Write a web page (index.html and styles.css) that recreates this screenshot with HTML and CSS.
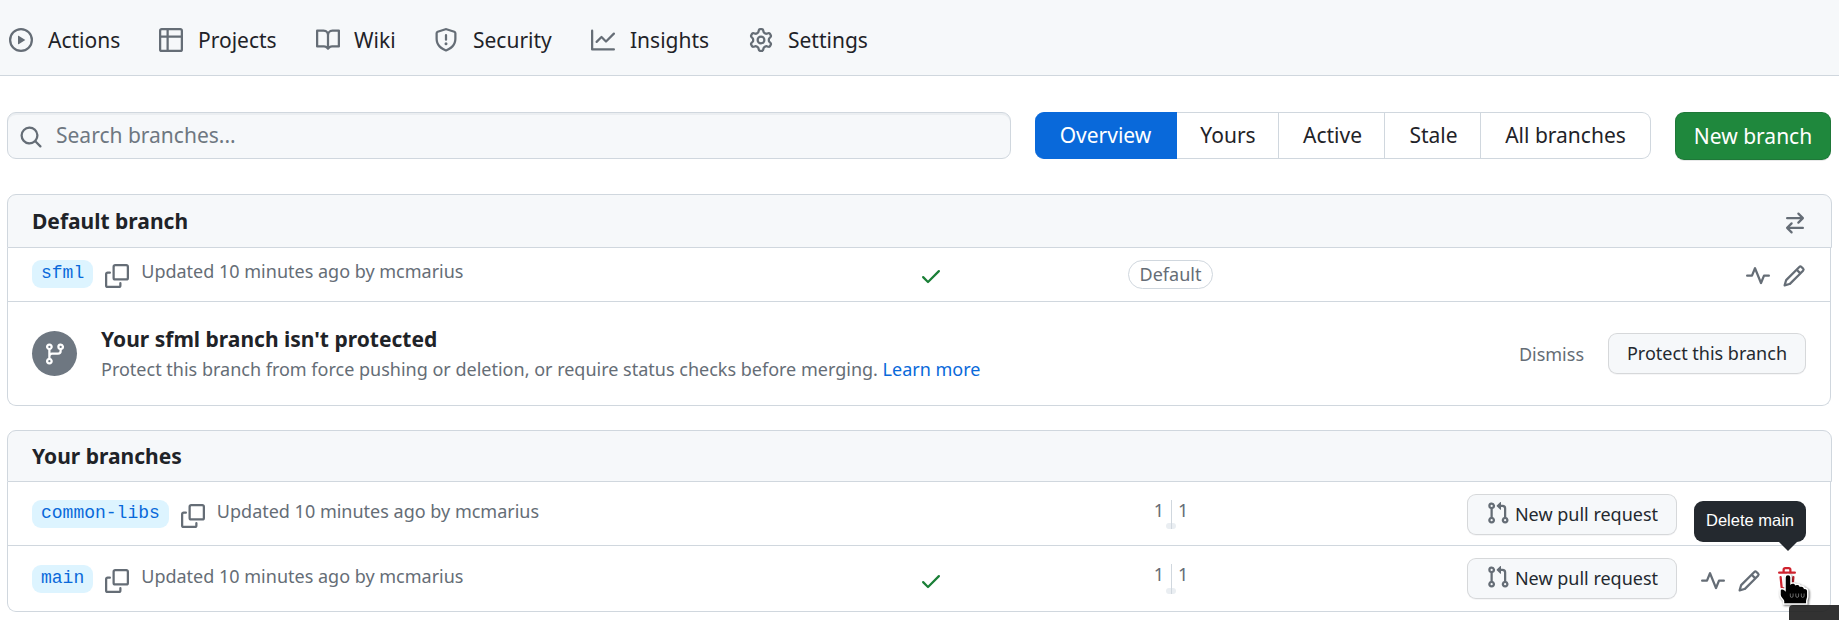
FILE: index.html
```html
<!DOCTYPE html>
<html lang="en">
<head>
<meta charset="utf-8">
<title>Branches</title>
<link rel="stylesheet" href="styles.css">
</head>
<body>
<svg class="sprite" aria-hidden="true">
  <symbol id="play" viewBox="0 0 16 16"><path d="M8 0a8 8 0 1 1 0 16A8 8 0 0 1 8 0ZM1.5 8a6.5 6.5 0 1 0 13 0 6.5 6.5 0 0 0-13 0Zm4.879-2.773 4.264 2.559a.25.25 0 0 1 0 .428l-4.264 2.559A.25.25 0 0 1 6 10.559V5.442a.25.25 0 0 1 .379-.215Z"/></symbol>
  <symbol id="table" viewBox="0 0 16 16"><path d="M0 1.75C0 .784.784 0 1.75 0h12.5C15.216 0 16 .784 16 1.75v12.5A1.75 1.75 0 0 1 14.25 16H1.75A1.75 1.75 0 0 1 0 14.25ZM6.5 6.5v8h7.75a.25.25 0 0 0 .25-.25V6.5Zm8-1.5V1.75a.25.25 0 0 0-.25-.25H6.5V5Zm-13 1.5v7.75c0 .138.112.25.25.25H5v-8ZM5 5V1.5H1.75a.25.25 0 0 0-.25.25V5Z"/></symbol>
  <symbol id="book" viewBox="0 0 16 16"><path d="M0 1.75A.75.75 0 0 1 .75 1h4.253c1.227 0 2.317.59 3 1.501A3.743 3.743 0 0 1 11.006 1h4.245a.75.75 0 0 1 .75.75v10.5a.75.75 0 0 1-.75.75h-4.507a2.25 2.25 0 0 0-1.591.659l-.622.621a.75.75 0 0 1-1.06 0l-.622-.621A2.25 2.25 0 0 0 5.258 13H.75a.75.75 0 0 1-.75-.75Zm7.251 10.324.004-5.073-.002-2.253A2.25 2.25 0 0 0 5.003 2.5H1.5v9h3.757a3.75 3.75 0 0 1 1.994.574ZM8.755 4.75l-.004 7.322a3.752 3.752 0 0 1 1.992-.572H14.5v-9h-3.495a2.25 2.25 0 0 0-2.25 2.25Z"/></symbol>
  <symbol id="shield" viewBox="0 0 16 16"><path d="M7.467.133a1.748 1.748 0 0 1 1.066 0l5.25 1.68A1.75 1.75 0 0 1 15 3.48V7c0 1.566-.32 3.182-1.303 4.682-.983 1.498-2.585 2.813-5.032 3.855a1.697 1.697 0 0 1-1.33 0c-2.447-1.042-4.049-2.357-5.032-3.855C1.32 10.182 1 8.566 1 7V3.48a1.75 1.75 0 0 1 1.217-1.667Zm.61 1.429a.25.25 0 0 0-.153 0l-5.25 1.68a.25.25 0 0 0-.174.238V7c0 1.358.275 2.666 1.057 3.86.784 1.194 2.121 2.34 4.366 3.297a.196.196 0 0 0 .154 0c2.245-.956 3.582-2.104 4.366-3.298C13.225 9.666 13.5 8.36 13.5 7V3.48a.251.251 0 0 0-.174-.237l-5.25-1.68ZM8.75 4.75v3a.75.75 0 0 1-1.5 0v-3a.75.75 0 0 1 1.5 0ZM9 10.5a1 1 0 1 1-2 0 1 1 0 0 1 2 0Z"/></symbol>
  <symbol id="graph" viewBox="0 0 16 16"><path d="M1.5 1.75V13.5h13.75a.75.75 0 0 1 0 1.5H.75a.75.75 0 0 1-.75-.75V1.75a.75.75 0 0 1 1.5 0Zm14.28 2.53-5.25 5.25a.75.75 0 0 1-1.06 0L7 7.06 4.28 9.78a.751.751 0 0 1-1.042-.018.751.751 0 0 1-.018-1.042l3.25-3.25a.75.75 0 0 1 1.06 0L10 7.94l4.72-4.72a.751.751 0 0 1 1.042.018.751.751 0 0 1 .018 1.042Z"/></symbol>
  <symbol id="gear" viewBox="0 0 16 16"><path d="M8 0a8.2 8.2 0 0 1 .701.031C9.444.095 9.99.645 10.16 1.29l.288 1.107c.018.066.079.158.212.224.231.114.454.243.668.386.123.082.233.09.299.071l1.103-.303c.644-.176 1.392.021 1.82.63.27.385.506.792.704 1.218.315.675.111 1.422-.364 1.891l-.814.806c-.049.048-.098.147-.088.294.016.257.016.515 0 .772-.01.147.038.246.088.294l.814.806c.475.469.679 1.216.364 1.891a7.977 7.977 0 0 1-.704 1.217c-.428.61-1.176.807-1.82.63l-1.102-.302c-.067-.019-.177-.011-.3.071a5.909 5.909 0 0 1-.668.386c-.133.066-.194.158-.211.224l-.29 1.106c-.168.646-.715 1.196-1.458 1.26a8.006 8.006 0 0 1-1.402 0c-.743-.064-1.289-.614-1.458-1.26l-.289-1.106c-.018-.066-.079-.158-.212-.224a5.738 5.738 0 0 1-.668-.386c-.123-.082-.233-.09-.299-.071l-1.103.303c-.644.176-1.392-.021-1.82-.63a8.12 8.12 0 0 1-.704-1.218c-.315-.675-.111-1.422.363-1.891l.815-.806c.05-.048.098-.147.088-.294a6.214 6.214 0 0 1 0-.772c.01-.147-.038-.246-.088-.294l-.815-.806C.635 6.045.431 5.298.746 4.623a7.92 7.92 0 0 1 .704-1.217c.428-.61 1.176-.807 1.82-.63l1.102.302c.067.019.177.011.3-.071.214-.143.437-.272.668-.386.133-.066.194-.158.211-.224l.29-1.106C6.009.645 6.556.095 7.299.03 7.53.01 7.764 0 8 0Zm-.571 1.525c-.036.003-.108.036-.137.146l-.289 1.105c-.147.561-.549.967-.998 1.189-.173.086-.34.183-.5.29-.417.278-.97.423-1.529.27l-1.103-.303c-.109-.03-.175.016-.195.045-.22.312-.412.644-.573.99-.014.031-.021.11.059.19l.815.806c.411.406.562.957.53 1.456a4.709 4.709 0 0 0 0 .582c.032.499-.119 1.05-.53 1.456l-.815.806c-.081.08-.073.159-.059.19.162.346.353.677.573.989.02.03.085.076.195.046l1.102-.303c.56-.153 1.113-.008 1.53.27.161.107.328.204.501.29.447.222.85.629.997 1.189l.289 1.105c.029.109.101.143.137.146a6.6 6.6 0 0 0 1.142 0c.036-.003.108-.036.137-.146l.289-1.105c.147-.561.549-.967.998-1.189.173-.086.34-.183.5-.29.417-.278.97-.423 1.529-.27l1.103.303c.109.029.175-.016.195-.045.22-.313.411-.644.573-.99.014-.031.021-.11-.059-.19l-.815-.806c-.411-.406-.562-.957-.53-1.456a4.709 4.709 0 0 0 0-.582c-.032-.499.119-1.05.53-1.456l.815-.806c.081-.08.073-.159.059-.19a6.464 6.464 0 0 0-.573-.989c-.02-.03-.085-.076-.195-.046l-1.102.303c-.56.153-1.113.008-1.53-.27a4.44 4.44 0 0 0-.501-.29c-.447-.222-.85-.629-.997-1.189l-.289-1.105c-.029-.11-.101-.143-.137-.146a6.6 6.6 0 0 0-1.142 0ZM11 8a3 3 0 1 1-6 0 3 3 0 0 1 6 0ZM9.5 8a1.5 1.5 0 1 0-3.001.001A1.5 1.5 0 0 0 9.5 8Z"/></symbol>
  <symbol id="search" viewBox="0 0 16 16"><path d="M10.68 11.74a6 6 0 0 1-7.922-8.982 6 6 0 0 1 8.982 7.922l3.04 3.04a.749.749 0 0 1-.326 1.275.749.749 0 0 1-.734-.215ZM11.5 7a4.499 4.499 0 1 0-8.997 0A4.499 4.499 0 0 0 11.5 7Z"/></symbol>
  <symbol id="switch" viewBox="0 0 16 16"><path d="M5.22 14.78a.75.75 0 0 0 1.06-1.06L4.56 12h8.69a.75.75 0 0 0 0-1.5H4.56l1.72-1.72a.75.75 0 0 0-1.06-1.06l-3 3a.75.75 0 0 0 0 1.06l3 3Zm5.56-6.5a.75.75 0 1 1-1.06-1.06l1.72-1.72H2.75a.75.75 0 0 1 0-1.5h8.69L9.72 2.28a.75.75 0 0 1 1.06-1.06l3 3a.75.75 0 0 1 0 1.06l-3 3Z"/></symbol>
  <symbol id="copy" viewBox="0 0 16 16"><path d="M0 6.75C0 5.784.784 5 1.75 5h1.5a.75.75 0 0 1 0 1.5h-1.5a.25.25 0 0 0-.25.25v7.5c0 .138.112.25.25.25h7.5a.25.25 0 0 0 .25-.25v-1.5a.75.75 0 0 1 1.5 0v1.5A1.75 1.75 0 0 1 9.25 16h-7.5A1.75 1.75 0 0 1 0 14.25ZM5 1.75C5 .784 5.784 0 6.75 0h7.5C15.216 0 16 .784 16 1.75v7.5A1.75 1.75 0 0 1 14.25 11h-7.5A1.75 1.75 0 0 1 5 9.25Zm1.75-.25a.25.25 0 0 0-.25.25v7.5c0 .138.112.25.25.25h7.5a.25.25 0 0 0 .25-.25v-7.5a.25.25 0 0 0-.25-.25Z"/></symbol>
  <symbol id="check" viewBox="0 0 16 16"><path d="M13.78 4.22a.75.75 0 0 1 0 1.06l-7.25 7.25a.75.75 0 0 1-1.06 0L2.22 9.28a.751.751 0 0 1 .018-1.042.751.751 0 0 1 1.042-.018L6 10.94l6.72-6.72a.75.75 0 0 1 1.06 0Z"/></symbol>
  <symbol id="pulse" viewBox="0 0 16 16"><path d="M6 2c.306 0 .582.187.696.471L10 10.731l1.304-3.26A.751.751 0 0 1 12 7h3.25a.75.75 0 0 1 0 1.5h-2.742l-1.812 4.528a.751.751 0 0 1-1.392 0L6 4.77 4.696 8.03A.75.75 0 0 1 4 8.5H.75a.75.75 0 0 1 0-1.5h2.742l1.812-4.529A.751.751 0 0 1 6 2Z"/></symbol>
  <symbol id="pencil" viewBox="0 0 16 16"><path d="M11.013 1.427a1.75 1.75 0 0 1 2.474 0l1.086 1.086a1.75 1.75 0 0 1 0 2.474l-8.61 8.61c-.21.21-.47.364-.756.445l-3.251.93a.75.75 0 0 1-.927-.928l.929-3.25c.081-.286.235-.547.445-.758l8.61-8.61Zm.176 4.823L9.75 4.81l-6.286 6.287a.253.253 0 0 0-.064.108l-.558 1.953 1.953-.558a.253.253 0 0 0 .108-.064Zm1.238-3.763a.25.25 0 0 0-.354 0L10.811 3.75l1.439 1.44 1.263-1.263a.25.25 0 0 0 0-.354Z"/></symbol>
  <symbol id="branch" viewBox="0 0 16 16"><path d="M9.5 3.25a2.25 2.25 0 1 1 3 2.122V6A2.5 2.5 0 0 1 10 8.5H6a1 1 0 0 0-1 1v1.128a2.251 2.251 0 1 1-1.5 0V5.372a2.25 2.25 0 1 1 1.5 0v1.836A2.493 2.493 0 0 1 6 7h4a1 1 0 0 0 1-1v-.628A2.25 2.25 0 0 1 9.5 3.25Zm-6 0a.75.75 0 1 0 1.5 0 .75.75 0 0 0-1.5 0Zm8.25-.75a.75.75 0 1 0 0 1.5.75.75 0 0 0 0-1.5ZM4.25 12a.75.75 0 1 0 0 1.5.75.75 0 0 0 0-1.5Z"/></symbol>
  <symbol id="pull" viewBox="0 0 16 16"><path d="M7.177 3.073 9.573.677A.25.25 0 0 1 10 .854v4.792a.25.25 0 0 1-.427.177L7.177 3.427a.25.25 0 0 1 0-.354ZM3.75 2.5a.75.75 0 1 0 0 1.5.75.75 0 0 0 0-1.5Zm-2.25.75a2.25 2.25 0 1 1 3 2.122v5.256a2.251 2.251 0 1 1-1.5 0V5.372A2.25 2.25 0 0 1 1.5 3.25ZM11 2.5h-1V4h1a1 1 0 0 1 1 1v5.628a2.251 2.251 0 1 0 1.5 0V5A2.5 2.5 0 0 0 11 2.5Zm1 10.25a.75.75 0 1 1 1.5 0 .75.75 0 0 1-1.5 0ZM3.75 12a.75.75 0 1 0 0 1.5.75.75 0 0 0 0-1.5Z"/></symbol>
  <symbol id="trash" viewBox="0 0 16 16"><path d="M11 1.75V3h2.25a.75.75 0 0 1 0 1.5H2.75a.75.75 0 0 1 0-1.5H5V1.75C5 .784 5.784 0 6.75 0h2.5C10.216 0 11 .784 11 1.75ZM4.496 6.675l.66 6.6a.25.25 0 0 0 .249.225h5.19a.25.25 0 0 0 .249-.225l.66-6.6a.75.75 0 0 1 1.492.149l-.66 6.6A1.748 1.748 0 0 1 10.595 15h-5.19a1.75 1.75 0 0 1-1.741-1.575l-.66-6.6a.75.75 0 1 1 1.492-.15ZM6.5 1.75V3h3V1.75a.25.25 0 0 0-.25-.25h-2.5a.25.25 0 0 0-.25.25Z"/></symbol>
</svg>

<nav class="nav">
  <a class="nav-item nav-actions"><svg class="icon"><use href="#play"/></svg>Actions</a>
  <a class="nav-item nav-projects"><svg class="icon"><use href="#table"/></svg>Projects</a>
  <a class="nav-item nav-wiki"><svg class="icon"><use href="#book"/></svg>Wiki</a>
  <a class="nav-item nav-security"><svg class="icon"><use href="#shield"/></svg>Security</a>
  <a class="nav-item nav-insights"><svg class="icon"><use href="#graph"/></svg>Insights</a>
  <a class="nav-item"><svg class="icon"><use href="#gear"/></svg>Settings</a>
</nav>

<main class="main">
  <div class="toolbar">
    <div class="search"><svg class="icon"><use href="#search"/></svg><span>Search branches...</span></div>
    <div class="tabs">
      <a class="tab tab-overview">Overview</a>
      <a class="tab tab-yours">Yours</a>
      <a class="tab tab-active">Active</a>
      <a class="tab tab-stale">Stale</a>
      <a class="tab tab-all">All branches</a>
    </div>
    <a class="new-branch">New branch</a>
  </div>

  <section class="box">
    <header class="box-head head-default"><h2>Default branch</h2><svg class="icon"><use href="#switch"/></svg></header>
    <div class="box-body">
      <div class="row row-default">
        <div class="name"><span class="chip">sfml</span><svg class="icon copy"><use href="#copy"/></svg><span class="updated">Updated 10 minutes ago by mcmarius</span></div>
        <div class="status"><svg class="icon check"><use href="#check"/></svg></div>
        <div class="middle"><span class="label">Default</span></div>
        <div class="actions"><svg class="icon"><use href="#pulse"/></svg><svg class="icon pencil"><use href="#pencil"/></svg></div>
      </div>
      <div class="protect">
        <div class="badge"><svg class="icon"><use href="#branch"/></svg></div>
        <div class="protect-text">
          <h3>Your sfml branch isn't protected</h3>
          <p>Protect this branch from force pushing or deletion, or require status checks before merging. <a class="link">Learn more</a></p>
        </div>
        <a class="dismiss">Dismiss</a>
        <a class="button protect-button">Protect this branch</a>
      </div>
    </div>
  </section>

  <section class="box box-yours">
    <header class="box-head head-yours"><h2>Your branches</h2></header>
    <div class="box-body">
      <div class="row row-common">
        <div class="name"><span class="chip">common-libs</span><svg class="icon copy"><use href="#copy"/></svg><span class="updated">Updated 10 minutes ago by mcmarius</span></div>
        <div class="status"></div>
        <div class="middle"><div class="counts"><span class="behind">1</span><span class="ahead">1</span></div></div>
        <div class="actions"><a class="button pr-button"><svg class="icon"><use href="#pull"/></svg>New pull request</a></div>
      </div>
      <div class="row row-main">
        <div class="name"><span class="chip">main</span><svg class="icon copy"><use href="#copy"/></svg><span class="updated">Updated 10 minutes ago by mcmarius</span></div>
        <div class="status"><svg class="icon check"><use href="#check"/></svg></div>
        <div class="middle"><div class="counts"><span class="behind">1</span><span class="ahead">1</span></div></div>
        <div class="actions">
          <a class="button pr-button"><svg class="icon"><use href="#pull"/></svg>New pull request</a>
          <svg class="icon pulse"><use href="#pulse"/></svg>
          <svg class="icon pencil"><use href="#pencil"/></svg>
          <svg class="icon trash"><use href="#trash"/></svg>
        </div>
      </div>
    </div>
  </section>
</main>

<div class="tooltip">Delete main</div>
<svg class="cursor" viewBox="0 0 36 40"><path d="M12 4.500c2 0 3 1.300 3 3v6c1.500-1 4-.5 4.500 1 1.500-.8 4-.2 4.600 1.600 1.600-.6 4 .2 4.400 2.200 1.600-.3 3.300 1 3.300 3v5.200c0 2-1 3-1 4.500v3H7.500v-3c0-1.500-3.500-3-3.500-6v-4.500c0-2 2.800-2.500 5-.5V7.500c0-1.700 1-3 3-3Z"/><g class="knuckles"><path d="M14.300 23.500v2.500a1.400 1.400 0 0 0 2.800 0v-2.500M19.800 23.500v2.500a1.400 1.400 0 0 0 2.800 0v-2.500M25.300 23.500v2.500a1.400 1.400 0 0 0 2.800 0v-2.500"/></g></svg>
<div class="corner-panel"></div>
</body>
</html>
```
FILE: styles.css
```css
* { box-sizing: border-box; }

body {
  position: relative;
  width: 1839px;
  height: 620px;
  margin: 0;
  overflow: hidden;
  background: #fff;
  color: #1f2328;
  font-family: "Noto Sans", sans-serif;
  font-size: 21px;
  line-height: 30px;
  white-space: nowrap;
}

h2, h3, p { margin: 0; }
h2, h3 { font-size: 21px; font-weight: 700; }

.sprite { position: absolute; width: 0; height: 0; }

.icon {
  display: block;
  flex: none;
  width: 24px;
  height: 24px;
  fill: #656d76;
}

/* repository navigation */
.nav {
  display: flex;
  height: 76px;
  padding: 25px 0 0 9px;
  background: #f6f8fa;
  border-bottom: 1px solid #d0d7de;
}
.nav-item { display: flex; gap: 15px; }
.nav-item .icon { margin-top: 3px; }
.nav-actions { width: 150px; }
.nav-projects { width: 157px; }
.nav-wiki { width: 118px; gap: 14px; }
.nav-security { width: 157px; }
.nav-insights { width: 158px; }

.main { padding: 36px 7px 0; }

/* search and filters */
.toolbar { display: flex; align-items: flex-start; height: 82px; }
.search {
  display: flex;
  width: 1004px;
  height: 47px;
  padding: 7px 0 0 11px;
  background: #f6f8fa;
  border: 1px solid #d0d7de;
  border-radius: 9px;
  box-shadow: inset 0 2px 0 rgba(208, 215, 222, .3);
  color: #6e7781;
}
.search .icon { margin: 5px 13px 0 0; }
.tabs { display: flex; margin-left: 24px; }
.tab {
  height: 47px;
  border: 1px solid #d0d7de;
  border-left: 0;
  line-height: 45px;
  text-align: center;
}
.tab-overview {
  width: 142px;
  background: #0969da;
  border-color: #0969da;
  border-radius: 9px 0 0 9px;
  color: #fff;
}
.tab-yours { width: 102px; padding-left: 1px; }
.tab-active { width: 106px; padding-left: 2px; }
.tab-stale { width: 96px; padding-left: 2px; }
.tab-all { width: 170px; border-radius: 0 9px 9px 0; }
.new-branch {
  width: 156px;
  height: 48px;
  margin-left: 24px;
  background: #1f883d;
  border: 1px solid rgba(31, 35, 40, .15);
  border-radius: 9px;
  box-shadow: 0 1px 0 rgba(31, 35, 40, .1);
  color: #fff;
  line-height: 47px;
  text-align: center;
}

/* branch lists */
.box-yours { margin-top: 24px; }
.box-head {
  display: flex;
  justify-content: space-between;
  align-items: flex-start;
  padding: 0 24px;
  background: #f6f8fa;
  border: 1px solid #d0d7de;
  border-radius: 9px 9px 0 0;
}
.head-default { height: 54px; padding-top: 11px; }
.head-default .icon { margin: 5px 0 0; }
.head-yours { height: 52px; padding-top: 10px; }
.box-body {
  width: 1824px;
  border: 1px solid #d0d7de;
  border-top: 0;
  border-radius: 0 0 9px 9px;
}
.row {
  display: grid;
  grid-template-columns: 887px 209px 339px 1fr;
  padding: 0 24px;
}
.row-default { height: 54px; padding-top: 12px; border-bottom: 1px solid #d0d7de; }
.row-common { height: 64px; padding-top: 12px; border-bottom: 1px solid #d0d7de; }
.row-main { height: 65px; padding-top: 12px; }
.name { display: flex; align-items: flex-start; font-size: 18px; }
.row-common .name { margin-top: 6px; }
.row-main .name { margin-top: 7px; }
.chip {
  height: 28px;
  padding: 0 9px;
  background: #ddf4ff;
  border-radius: 9px;
  color: #0969da;
  font-family: "Liberation Mono", monospace;
  line-height: 27px;
}
.copy { margin: 4px 12px 0; }
.updated { color: #656d76; line-height: 24px; margin-top: -1px; }
.check { margin-top: 4px; fill: #1a7f37; }
.row-main .check { margin-top: 11px; }
.label {
  display: block;
  width: 85px;
  height: 29px;
  border: 1px solid #d0d7de;
  border-radius: 15px;
  color: #656d76;
  font-size: 18px;
  line-height: 27px;
  text-align: center;
}
.actions { display: flex; align-items: flex-start; }
.row-default .actions { justify-content: flex-end; gap: 12px; padding-top: 4px; }

.protect { display: flex; height: 103px; padding: 29px 24px 0 24px; }
.badge {
  display: grid;
  place-items: center;
  width: 45px;
  height: 45px;
  background: #6e7781;
  border-radius: 50%;
}
.badge .icon { fill: #fff; }
.protect-text { flex: 1; margin-left: 24px; }
.protect-text h3 { margin-top: -7px; }
.protect-text p { color: #656d76; font-size: 18px; }
.link { color: #0969da; }
.dismiss { margin: 8px 24px 0 0; color: #656d76; font-size: 18px; }
.button {
  display: flex;
  justify-content: center;
  height: 41px;
  background: #f6f8fa;
  border: 1px solid rgba(31, 35, 40, .15);
  border-radius: 9px;
  box-shadow: 0 1px 0 rgba(31, 35, 40, .04);
  color: #24292f;
  font-size: 18px;
  line-height: 39px;
}
.protect-button { width: 198px; margin-top: 2px; }
.pr-button { flex: none; width: 210px; }
.pr-button .icon { margin: 6px 5px 0 0; }
.pulse { margin: 11px 0 0 24px; }
.row-main .pencil { margin: 11px 0 0 12px; }
.trash { margin: 9px 0 0 14px; fill: #cf222e; }

/* behind / ahead counters */
.counts {
  position: relative;
  display: flex;
  width: 87px;
  height: 35px;
  padding-top: 4px;
  color: #656d76;
  font-size: 18px;
  line-height: 24px;
}
.row-main .counts { height: 36px; }
.behind { width: 43px; padding-right: 7px; text-align: right; }
.ahead { width: 44px; padding-left: 7px; }
.counts::before {
  content: "";
  position: absolute;
  left: 38px;
  bottom: 0;
  width: 10px;
  height: 6px;
  background: #eaeef2;
  border-radius: 3px;
}
.counts::after {
  content: "";
  position: absolute;
  left: 43px;
  top: 6px;
  bottom: 0;
  width: 1px;
  background: #d0d7de;
}

/* overlays */
.tooltip {
  position: absolute;
  left: 1694px;
  top: 501px;
  width: 112px;
  height: 41px;
  background: #24292f;
  border-radius: 9px;
  color: #fff;
  font-family: "Liberation Sans", Arial, sans-serif;
  font-size: 16.5px;
  line-height: 39px;
  text-align: center;
}
.tooltip::after {
  content: "";
  position: absolute;
  left: 85px;
  top: 41px;
  border: 9px solid transparent;
  border-top-color: #24292f;
  border-bottom: 0;
}
.corner-panel {
  position: absolute;
  left: 1789px;
  top: 605px;
  width: 50px;
  height: 15px;
  background: rgba(30, 30, 30, .91);
  border-radius: 4px 0 0 0;
}
.cursor {
  position: absolute;
  left: 1776px;
  top: 570px;
  width: 36px;
  height: 40px;
  fill: #000;
  stroke: #fff;
  stroke-width: 1.5;
  filter: drop-shadow(1px 1px 1px rgba(0, 0, 0, .6));
}
.knuckles { fill: none; stroke: #aaa; stroke-width: .6; }
```
